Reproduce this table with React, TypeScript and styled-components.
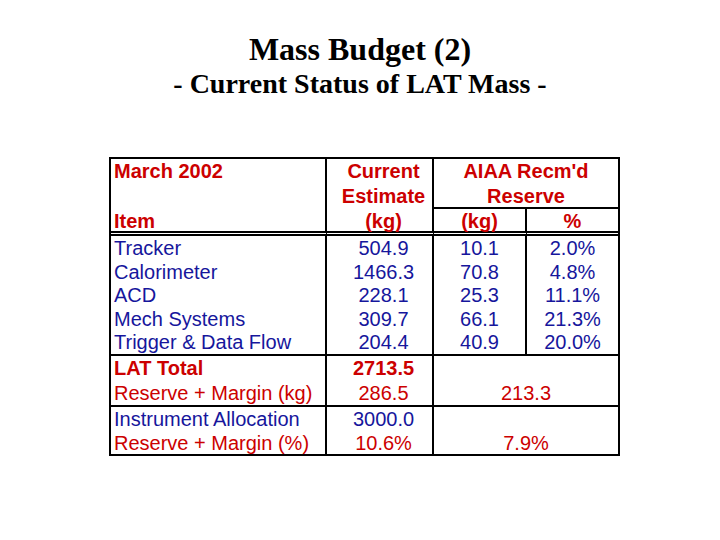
import styled, { createGlobalStyle } from 'styled-components'

const RED = '#cc0000'
const BLUE = '#16169c'

const GlobalStyle = createGlobalStyle`
  html, body {
    margin: 0;
    padding: 0;
    background: #ffffff;
  }
`

const Page = styled.div`
  width: 720px;
  height: 540px;
  overflow: hidden;
  background: #fff;
`

const TitleBlock = styled.div`
  padding-top: 31px;
  text-align: center;
  font-family: 'Liberation Serif', 'Times New Roman', serif;
  font-weight: bold;
  color: #000;
`

const Title = styled.div`
  font-size: 32px;
  line-height: 37px;
`

const Subtitle = styled.div`
  font-size: 28px;
  line-height: 32px;
`

const Table = styled.div`
  margin: 57px 0 0 109px;
  width: 507px;
  border: 2px solid #000;
  display: grid;
  grid-template-columns: 216px 107px 93px 91px;
  font-family: 'Liberation Sans', Arial, sans-serif;
  font-size: 20px;
`

type Edge = 'double' | 'solid' | 'none'

const Cell = styled.div<{
  $col: string
  $row?: string
  $bottom?: Edge
  $right?: boolean
  $align?: 'left' | 'center'
  $shift?: number
  $spread?: boolean
}>`
  grid-column: ${({ $col }) => $col};
  grid-row: ${({ $row }) => $row || 'auto'};
  display: flex;
  flex-direction: column;
  justify-content: ${({ $spread }) => ($spread ? 'space-between' : 'flex-start')};
  text-align: ${({ $align }) => $align || 'center'};
  padding-left: ${({ $align, $shift }) => ($align === 'left' ? 3 : $shift || 0)}px;
  border-right: ${({ $right }) => ($right ? '2px solid #000' : 'none')};
  border-bottom: ${({ $bottom }) =>
    $bottom === 'double'
      ? '5px double #000'
      : $bottom === 'solid'
        ? '2px solid #000'
        : 'none'};
`

// $drop nudges the text down inside its fixed line box
const Line = styled.div<{ $color: string; $bold?: boolean; $h?: number; $drop?: number }>`
  box-sizing: border-box;
  color: ${({ $color }) => $color};
  font-weight: ${({ $bold }) => ($bold ? 'bold' : 'normal')};
  line-height: ${({ $h }) => $h || 24}px;
  height: ${({ $h }) => $h || 24}px;
  padding-top: ${({ $drop }) => $drop || 0}px;
  white-space: nowrap;
`

const items = [
  { name: 'Tracker', est: '504.9', kg: '10.1', pct: '2.0%' },
  { name: 'Calorimeter', est: '1466.3', kg: '70.8', pct: '4.8%' },
  { name: 'ACD', est: '228.1', kg: '25.3', pct: '11.1%' },
  { name: 'Mech Systems', est: '309.7', kg: '66.1', pct: '21.3%' },
  { name: 'Trigger & Data Flow', est: '204.4', kg: '40.9', pct: '20.0%' },
]

const ROW = 23.6

export default function App() {
  return (
    <Page>
      <GlobalStyle />
      <TitleBlock>
        <Title>Mass Budget (2)</Title>
        <Subtitle>- Current Status of LAT Mass -</Subtitle>
      </TitleBlock>

      <Table>
        <Cell $col='1' $row='1 / 3' $align='left' $right $bottom='double' $spread>
          <Line $color={RED} $bold>March 2002</Line>
          <Line $color={RED} $bold $drop={2}>Item</Line>
        </Cell>
        <Cell $col='2' $row='1 / 3' $right $bottom='double' $shift={8}>
          <Line $color={RED} $bold>Current</Line>
          <Line $color={RED} $bold $drop={1}>Estimate</Line>
          <Line $color={RED} $bold $drop={1.5}>(kg)</Line>
        </Cell>
        <Cell $col='3 / 5' $row='1' $bottom='solid'>
          <Line $color={RED} $bold>AIAA Recm'd</Line>
          <Line $color={RED} $bold $drop={1}>Reserve</Line>
        </Cell>
        <Cell $col='3' $row='2' $right $bottom='double'>
          <Line $color={RED} $bold $h={22} $drop={1}>(kg)</Line>
        </Cell>
        <Cell $col='4' $row='2' $bottom='double'>
          <Line $color={RED} $bold $h={22} $drop={1}>%</Line>
        </Cell>

        <Cell $col='1' $align='left' $right $bottom='solid'>
          {items.map((it) => (
            <Line key={it.name} $color={BLUE} $h={ROW} $drop={1}>{it.name}</Line>
          ))}
        </Cell>
        <Cell $col='2' $right $bottom='solid' $shift={8}>
          {items.map((it) => (
            <Line key={it.name} $color={BLUE} $h={ROW} $drop={1}>{it.est}</Line>
          ))}
        </Cell>
        <Cell $col='3' $right $bottom='solid'>
          {items.map((it) => (
            <Line key={it.name} $color={BLUE} $h={ROW} $drop={1}>{it.kg}</Line>
          ))}
        </Cell>
        <Cell $col='4' $bottom='solid'>
          {items.map((it) => (
            <Line key={it.name} $color={BLUE} $h={ROW} $drop={1}>{it.pct}</Line>
          ))}
        </Cell>

        <Cell $col='1' $align='left' $right $bottom='solid'>
          <Line $color={RED} $bold $h={24.5}>LAT Total</Line>
          <Line $color={RED} $h={24.5} $drop={1}>Reserve + Margin (kg)</Line>
        </Cell>
        <Cell $col='2' $right $bottom='solid' $shift={8}>
          <Line $color={RED} $bold $h={24.5}>2713.5</Line>
          <Line $color={RED} $h={24.5} $drop={1}>286.5</Line>
        </Cell>
        <Cell $col='3 / 5' $bottom='solid'>
          <Line $color={RED} $h={24.5} />
          <Line $color={RED} $h={24.5} $drop={1}>213.3</Line>
        </Cell>

        <Cell $col='1' $align='left' $right>
          <Line $color={BLUE} $h={23.5} $drop={1}>Instrument Allocation</Line>
          <Line $color={RED} $h={23.5} $drop={2}>Reserve + Margin (%)</Line>
        </Cell>
        <Cell $col='2' $right $shift={8}>
          <Line $color={BLUE} $h={23.5} $drop={1}>3000.0</Line>
          <Line $color={RED} $h={23.5} $drop={2}>10.6%</Line>
        </Cell>
        <Cell $col='3 / 5'>
          <Line $color={RED} $h={23.5} />
          <Line $color={RED} $h={23.5} $drop={2}>7.9%</Line>
        </Cell>
      </Table>
    </Page>
  )
}
